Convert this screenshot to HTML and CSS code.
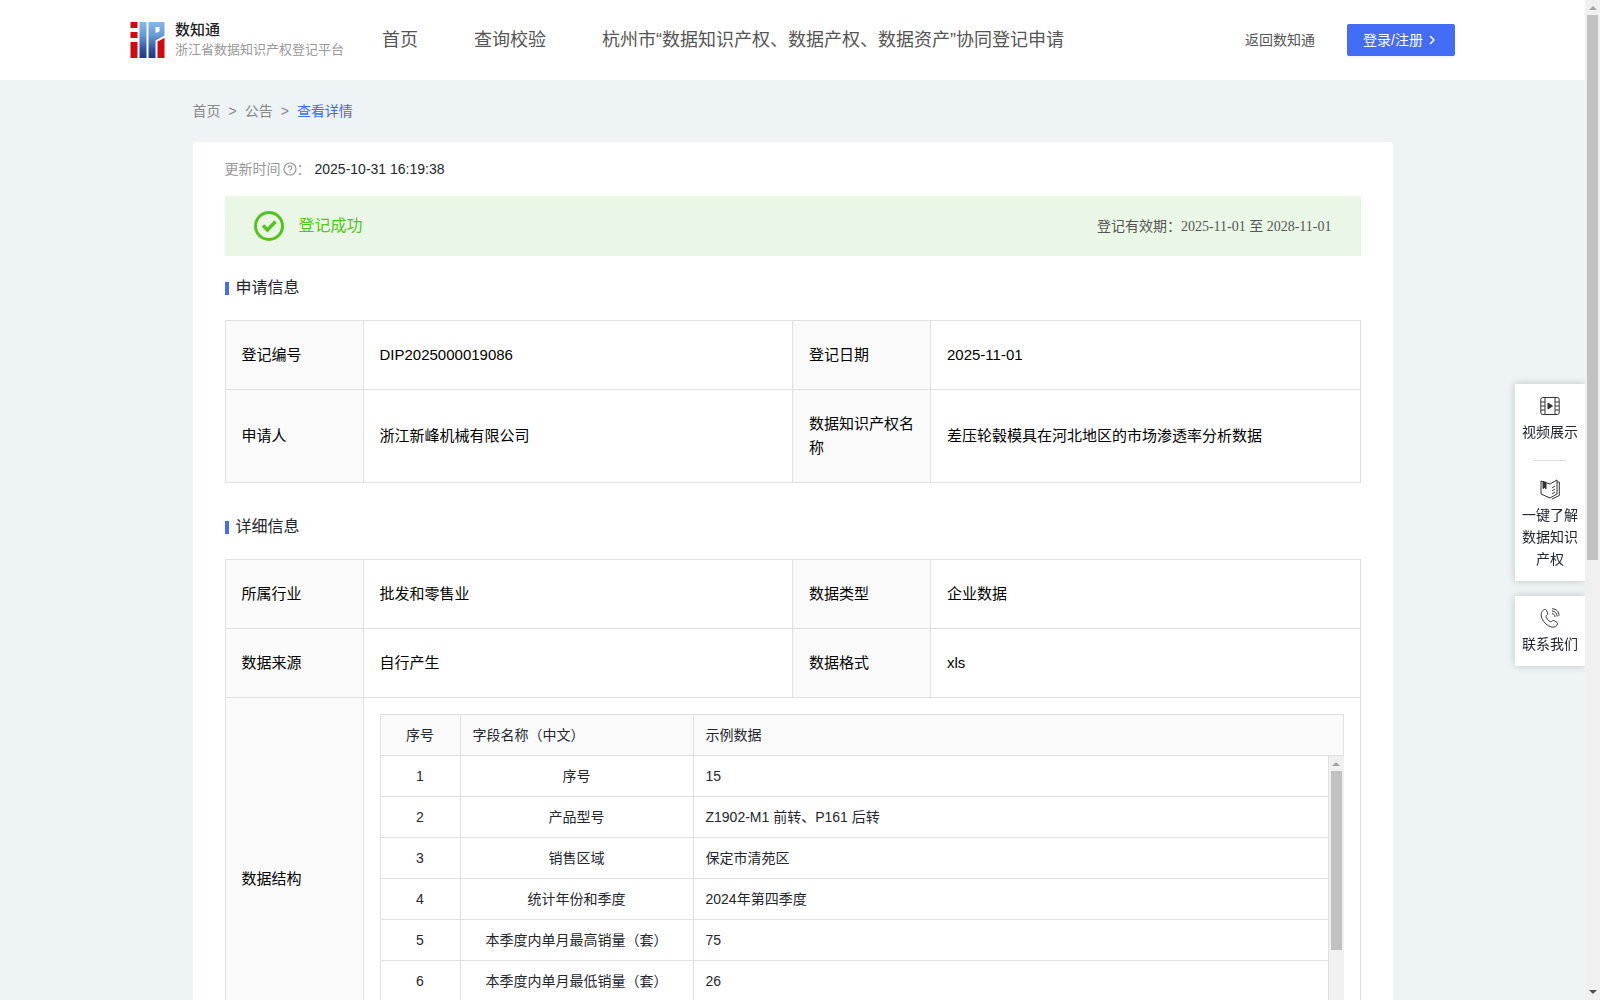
FILE: index.html
```html
<!DOCTYPE html>
<html lang="zh-CN">

<head>
    <meta charset="UTF-8">
    <meta name="viewport" content="width=device-width, initial-scale=1.0">
    <title>数知通 - 查看详情</title>
    <link rel="stylesheet" href="styles.css">
</head>

<body>
    <div class="page">
        <header class="header">
            <div class="brand">
                <svg class="brand-logo" viewBox="0 0 34 36" aria-hidden="true">
                    <defs>
                        <linearGradient id="blue" x1="0" y1="0" x2="0" y2="36" gradientUnits="userSpaceOnUse">
                            <stop offset="0" stop-color="#86b8ea" />
                            <stop offset="0.35" stop-color="#6b9cd8" />
                            <stop offset="0.8" stop-color="#2c4d9c" />
                            <stop offset="1" stop-color="#213a80" />
                        </linearGradient>
                    </defs>
                    <path fill="#d20a10" d="M0 0h7v6H0zM0 10h7v6H0zM0 20h7v16H0zM27 19.500l7-3.500v20h-7z" />
                    <path fill="url(#blue)" d="M9 0h7v36H9zM18 0h16v13.500l-9 5V36h-7zM25 5v6l4-1.500V5z" fill-rule="evenodd" />
                </svg>
                <div>
                    <div class="brand-name">数知通</div>
                    <div class="brand-desc">浙江省数据知识产权登记平台</div>
                </div>
            </div>
            <nav class="nav">
                <a href="#">首页</a>
                <a href="#">查询校验</a>
                <a href="#">杭州市“数据知识产权、数据产权、数据资产”协同登记申请</a>
            </nav>
            <a class="back" href="#">返回数知通</a>
            <button class="login" type="button">登录/注册
                <svg viewBox="0 0 14 14" aria-hidden="true"><path d="M5 3l4 4-4 4" /></svg>
            </button>
        </header>

        <main class="container">
            <nav class="breadcrumb">
                <a href="#">首页</a><span>&gt;</span><a href="#">公告</a><span>&gt;</span><a class="active" href="#">查看详情</a>
            </nav>

            <div class="card">
                <div class="update">
                    <span class="update-label">更新时间</span>
                    <svg viewBox="0 0 14 14" aria-hidden="true">
                        <circle cx="7" cy="7" r="6" />
                        <path d="M5.200 5.700a1.800 1.800 0 1 1 2.700 1.500c-.6.4-.9.600-.9 1.300M7 9.600v1.100" />
                    </svg>
                    <span class="update-label">：</span>
                    <span class="update-time">2025-10-31 16:19:38</span>
                </div>

                <div class="banner">
                    <svg viewBox="0 0 30 30" aria-hidden="true">
                        <circle cx="15" cy="15" r="13.500" stroke-width="3" />
                        <path d="M9 14.500l4.500 4.500 8-8.500" stroke-width="3.500" />
                    </svg>
                    <span class="banner-status">登记成功</span>
                    <span class="banner-term">登记有效期：<span class="term-date">2025-11-01 至 2028-11-01</span></span>
                </div>

                <h2 class="title">申请信息</h2>
                <table class="info">
                    <colgroup><col class="col-label"><col><col class="col-label"><col></colgroup>
                    <tr>
                        <th scope="row">登记编号</th>
                        <td>DIP2025000019086</td>
                        <th scope="row">登记日期</th>
                        <td>2025-11-01</td>
                    </tr>
                    <tr>
                        <th scope="row">申请人</th>
                        <td>浙江新峰机械有限公司</td>
                        <th scope="row">数据知识产权名称</th>
                        <td>差压轮毂模具在河北地区的市场渗透率分析数据</td>
                    </tr>
                </table>

                <h2 class="title">详细信息</h2>
                <table class="info">
                    <colgroup><col class="col-label"><col><col class="col-label"><col></colgroup>
                    <tr>
                        <th scope="row">所属行业</th>
                        <td>批发和零售业</td>
                        <th scope="row">数据类型</th>
                        <td>企业数据</td>
                    </tr>
                    <tr>
                        <th scope="row">数据来源</th>
                        <td>自行产生</td>
                        <th scope="row">数据格式</th>
                        <td>xls</td>
                    </tr>
                    <tr>
                        <th scope="row">数据结构</th>
                        <td class="nested" colspan="3">
                            <table class="fields fields-head">
                                <colgroup><col class="col-no"><col class="col-name"><col></colgroup>
                                <tr>
                                    <th class="center">序号</th>
                                    <th>字段名称（中文）</th>
                                    <th>示例数据</th>
                                </tr>
                            </table>
                            <div class="fields-body">
                                <table class="fields">
                                    <colgroup><col class="col-no"><col class="col-name"><col></colgroup>
                                    <tr><td class="center">1</td><td class="center">序号</td><td>15</td></tr>
                                    <tr><td class="center">2</td><td class="center">产品型号</td><td>Z1902-M1 前转、P161 后转</td></tr>
                                    <tr><td class="center">3</td><td class="center">销售区域</td><td>保定市清苑区</td></tr>
                                    <tr><td class="center">4</td><td class="center">统计年份和季度</td><td>2024年第四季度</td></tr>
                                    <tr><td class="center">5</td><td class="center">本季度内单月最高销量（套）</td><td>75</td></tr>
                                    <tr><td class="center">6</td><td class="center">本季度内单月最低销量（套）</td><td>26</td></tr>
                                </table>
                                <div class="scrollbar">
                                    <i class="arrow-up"></i>
                                    <div class="thumb thumb-fields"></div>
                                    <i class="arrow-down"></i>
                                </div>
                            </div>
                        </td>
                    </tr>
                </table>
            </div>
        </main>
    </div>

    <div class="scrollbar">
        <i class="arrow-up"></i>
        <div class="thumb thumb-page"></div>
        <i class="arrow-down"></i>
    </div>

    <aside class="side">
        <div class="side-box">
            <a class="side-item" href="#">
                <svg viewBox="0 0 20 20" aria-hidden="true">
                    <rect x="0.800" y="1.500" width="18.400" height="17" rx="2" />
                    <path d="M5 1.500v17M15 1.500v17M1 6h4M1 10h4M1 14h4M15 6h4M15 10h4M15 14h4" />
                    <path class="solid" d="M8 7v6l4.500-3z" />
                </svg>
                视频展示
            </a>
            <div class="side-line"></div>
            <a class="side-item" href="#">
                <svg viewBox="0 0 20 20" aria-hidden="true">
                    <path d="M1 2v13l9 4 7-4V1l-7 4-9-3M17 3h2.300v13.500L12 20M12 9l3-2M12 12l3-2M12 15l3-2" />
                    <path class="solid" d="M3 2.500l3 1V10l-1.500-1.500L3 9.500z" />
                </svg>
                一键了解数据知识产权
            </a>
        </div>
        <div class="side-box">
            <a class="side-item" href="#">
                <svg viewBox="0 0 20 20" aria-hidden="true">
                    <path d="M3.500 2C1 4 .5 7 2 10.500c2 4.500 5.500 7.500 9.500 8.500 3 .7 5.500-.8 6-3 .2-1-.3-1.600-1-2l-2-1.200c-1-.6-1.800-.3-2.500.4-.8.8-1.500.8-2.500.1-1.500-1-2.500-2.300-3.300-4-.4-1-.2-1.500.6-2.200.9-.7 1.100-1.400.7-2.400l-.8-2C6 1.300 4.700 1 3.500 2z" />
                    <path d="M12 5.500c1.800.3 3 1.500 3 3.500M12 3c3.200.2 5 2.300 5.200 5.500M12 .8c4.500 0 7 3 7 7" />
                </svg>
                联系我们
            </a>
        </div>
    </aside>
</body>

</html>
```
FILE: styles.css
```css
* {
    box-sizing: border-box;
}

body {
    display: flex;
    height: 100vh;
    margin: 0;
    overflow: hidden;
    font-family: "Liberation Sans", "Noto Sans CJK SC", sans-serif;
    font-size: 14px;
    line-height: 22px;
    color: #24262f;
    background-color: #eef3f6;
}

a {
    color: inherit;
    text-decoration: none;
}

table {
    width: 100%;
    border-collapse: collapse;
    table-layout: fixed;
}

th,
td {
    border: 1px solid #e0e0e0;
    font-weight: normal;
    text-align: left;
}

th {
    background-color: #fafafa;
}

.page {
    flex: 1;
    min-width: 0;
    overflow: hidden;
}

/* header */
.header {
    display: flex;
    align-items: center;
    height: 80px;
    padding: 0 130px;
    background-color: #fff;
    color: #555;
}

.brand {
    display: flex;
    flex: none;
    align-items: center;
    gap: 10px;
    width: 252px;
}

.brand-logo {
    width: 35px;
    height: 36px;
}

.brand-name {
    font-size: 15px;
    line-height: 20px;
    font-weight: 500;
    color: #222;
}

.brand-desc {
    font-size: 13px;
    line-height: 20px;
    color: #999;
    white-space: nowrap;
}

.nav {
    display: flex;
    flex: 1;
    gap: 56px;
    font-size: 18px;
    white-space: nowrap;
}

.back {
    margin-right: 32px;
}

.login {
    display: flex;
    align-items: center;
    gap: 2px;
    height: 32px;
    padding: 0 16px;
    border: 0;
    border-radius: 2px;
    background-color: #446df6;
    box-shadow: 0 2px 0 rgba(0, 0, 0, 0.04);
    color: #fff;
    font: inherit;
}

.login svg {
    width: 14px;
    height: 14px;
    fill: none;
    stroke: #fff;
    stroke-width: 1.5;
}

/* content */
.container {
    max-width: 1200px;
    margin: 0 auto;
}

.breadcrumb {
    display: flex;
    gap: 8px;
    padding: 20px 0;
    color: #888;
}

.breadcrumb .active {
    color: #3b6cf5;
}

.card {
    padding: 16px 32px;
    border-radius: 4px;
    background-color: #fff;
}

.update {
    display: flex;
    align-items: center;
    margin-bottom: 16px;
}

.update svg {
    width: 14px;
    height: 14px;
    margin-left: 2px;
    fill: none;
    stroke: #999;
    stroke-width: 1.2;
}

.update-label {
    color: #999;
}

.update-time {
    margin-left: 4px;
}

.banner {
    display: flex;
    align-items: center;
    height: 60px;
    margin-bottom: 20px;
    padding: 0 29px;
    background-color: #ebf7e6;
}

.banner svg {
    width: 30px;
    height: 30px;
    margin-right: 15px;
    fill: none;
    stroke: #52c41a;
}

.banner-status {
    flex: 1;
    font-size: 16px;
    color: #52c41a;
}

.banner-term {
    color: #555;
}

.term-date {
    font-family: "Liberation Serif", "Noto Sans CJK SC", serif;
}

.title {
    display: flex;
    align-items: center;
    gap: 7px;
    margin: 0 0 20px;
    font-size: 16px;
    line-height: 24px;
    font-weight: normal;
}

.title::before {
    content: "";
    width: 4px;
    height: 13px;
    background-color: #446df6;
}

.info {
    margin-bottom: 32px;
    font-size: 15px;
    line-height: 24px;
    color: #000;
}

.info th,
.info td {
    padding: 22px 16px;
}

.col-label {
    width: 138px;
}

.info .nested {
    padding: 16px;
}

.fields {
    margin: 0;
    font-size: 14px;
    line-height: 22px;
    color: #24262f;
}

.info .fields th,
.info .fields td {
    height: 41px;
    padding: 0 12px;
}

.info .fields .center {
    text-align: center;
}

.col-no {
    width: 80px;
}

.col-name {
    width: 233px;
}

.fields-body {
    display: flex;
    align-items: flex-start;
    height: 288px;
    overflow: hidden;
}

.fields-body .fields {
    flex: 1;
    width: auto;
}

/* the header table already draws this line */
.info .fields-body tr:first-child td {
    height: 40px;
    border-top: 0;
}

/* scrollbars */
.scrollbar {
    display: flex;
    flex: none;
    flex-direction: column;
    align-items: center;
    align-self: stretch;
    width: 15px;
    background-color: #f0f0f0;
}

.arrow-up,
.arrow-down {
    height: 4px;
    border-left: 4px solid transparent;
    border-right: 4px solid transparent;
}

.arrow-up {
    margin: 6px 0 5px;
    border-bottom: 4px solid #a3a3a3;
}

.arrow-down {
    margin: auto 0 6px;
    border-top: 4px solid #505050;
}

.thumb {
    width: 11px;
    background-color: #c1c1c1;
}

.thumb-page {
    height: 54.5%;
}

.thumb-fields {
    height: 62%;
}

/* floating links */
.side {
    position: fixed;
    top: 384px;
    right: 15px;
    width: 70px;
    clip-path: inset(-20px 0 -20px -20px);
}

.side-box {
    margin-bottom: 15px;
    background-color: #fff;
    box-shadow: 0 0 8px rgba(0, 0, 0, 0.2);
}

.side-item {
    display: block;
    padding: 12px 7px 11px;
    text-align: center;
}

.side-item svg {
    display: block;
    width: 20px;
    height: 20px;
    margin: 0 auto 5px;
    fill: none;
    stroke: #333;
    overflow: visible;
}

.side-item .solid {
    fill: #333;
}

.side-line {
    width: 32px;
    height: 1px;
    margin: 6px auto;
    background-color: #ddd;
}
```
